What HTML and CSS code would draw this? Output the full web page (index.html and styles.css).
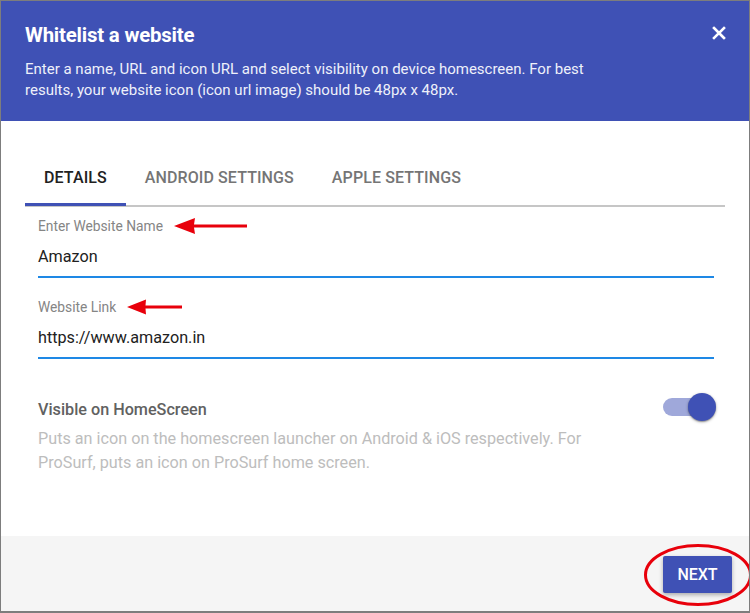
FILE: index.html
```html
<!DOCTYPE html>
<html>
<head>
<meta charset="utf-8">
<link rel="stylesheet" href="styles.css">
</head>
<body>
<div class="dialog">
  <header class="header">
    <div class="title-row">
      <h1 class="title">Whitelist a website</h1>
      <span class="close" aria-label="close">
        <svg width="14" height="14" viewBox="0 0 14 14"><path d="M2 2 L12 12 M12 2 L2 12" stroke="#fff" stroke-width="2.6" stroke-linecap="square"/></svg>
      </span>
    </div>
    <p class="subtitle">Enter a name, URL and icon URL and select visibility on device homescreen. For best results, your website icon (icon url image) should be 48px x 48px.</p>
  </header>

  <main class="content">
    <nav class="tabs">
      <div class="tab active">DETAILS</div>
      <div class="tab">ANDROID SETTINGS</div>
      <div class="tab">APPLE SETTINGS</div>
    </nav>

    <div class="fields">
      <div class="field">
        <div class="label">Enter Website Name<svg class="arrow" width="74" height="18" viewBox="0 0 74 18"><path d="M0 9 L21 1 L20 7.5 L73 7.5 L73 10.5 L20 10.5 L21 17 Z" fill="#e8000b"/></svg></div>
        <div class="input">Amazon</div>
      </div>
      <div class="field second">
        <div class="label">Website Link<svg class="arrow" width="56" height="16" viewBox="0 0 56 16"><path d="M0 8 L19 0.5 L18.5 6.5 L55 6.5 L55 9.5 L18.5 9.5 L19 15.5 Z" fill="#e8000b"/></svg></div>
        <div class="input">https://www.amazon.in</div>
      </div>
    </div>

    <div class="visible-row">
      <div class="visible-text">
        <div class="visible-title">Visible on HomeScreen</div>
        <p class="visible-desc">Puts an icon on the homescreen launcher on Android &amp; iOS respectively. For ProSurf, puts an icon on ProSurf home screen.</p>
      </div>
      <div class="switch"><span class="track"></span><span class="thumb"></span></div>
    </div>
  </main>

  <footer class="footer">
    <div class="btn-wrap">
      <button class="next">NEXT</button>
      <svg class="ring" width="110" height="64" viewBox="0 0 110 64"><ellipse cx="55" cy="32" rx="52.5" ry="29.5" fill="none" stroke="#e8000b" stroke-width="3"/></svg>
    </div>
  </footer>
</div>
</body>
</html>
```

FILE: styles.css
```css
* { box-sizing: border-box; }
html, body { margin: 0; padding: 0; background: #fff; }
body { font-family: Roboto, "Noto Sans", Arial, sans-serif; }

.dialog {
  width: 750px;
  height: 613px;
  border: 1px solid #7d7d7d;
  border-bottom-width: 2px;
  display: flex;
  flex-direction: column;
  background: #fff;
  overflow: hidden;
}

.header {
  background: #3f51b5;
  color: #fff;
  padding: 21px 25px 20px 24px;
  height: 120px;
}
.title-row {
  display: flex;
  justify-content: space-between;
  align-items: center;
  height: 26px;
}
.title {
  margin: 0;
  font-size: 20.4px;
  font-weight: 700;
  line-height: 26px;
  letter-spacing: -0.2px;
}
.close {
  display: flex;
  width: 14px;
  height: 14px;
  margin-right: -2px;
  margin-top: -4px;
}
.subtitle {
  margin: 11px 0 0;
  font-size: 15px;
  line-height: 21px;
  max-width: 575px;
  color: #eef0fa;
}

.content {
  flex: 1;
  padding: 32px 24px 0 24px;
}

.tabs {
  display: flex;
  border-bottom: 2px solid #c6c6c6;
  height: 54px;
}
.tab {
  height: 52px;
  padding: 0 19px 4px;
  display: flex;
  align-items: center;
  justify-content: center;
  font-size: 16px;
  font-weight: 500;
  color: #757575;
  letter-spacing: 0.1px;
}
.tab.active {
  color: #212121;
  min-width: 100px;
  border-bottom: 3px solid #3f51b5;
  height: 53px;
  margin-bottom: -2px;
  padding-bottom: 2px;
}

.fields {
  padding: 10px 11px 0 13px;
}
.field.second { margin-top: 20px; }
.label {
  display: flex;
  align-items: center;
  font-size: 13.8px;
  line-height: 18px;
  height: 18px;
  color: #858585;
}
.arrow { margin-left: 11px; flex: none; }
.input {
  margin-top: 10px;
  font-size: 16.2px;
  line-height: 24px;
  color: #212121;
  padding-bottom: 7px;
  border-bottom: 2px solid #1e88e5;
}

.visible-row {
  display: flex;
  justify-content: space-between;
  align-items: flex-start;
  padding: 39px 9px 0 13px;
}
.visible-title {
  font-size: 16.2px;
  font-weight: 500;
  line-height: 24px;
  color: #616161;
}
.visible-desc {
  margin: 5px 0 0;
  font-size: 16.2px;
  line-height: 24px;
  color: #bdbdbd;
  max-width: 570px;
}
.switch {
  position: relative;
  width: 53px;
  height: 28px;
  margin-top: -5px;
  flex: none;
}
.track {
  position: absolute;
  left: 0;
  top: 5px;
  width: 46px;
  height: 18px;
  border-radius: 9px;
  background: #9fa8da;
}
.thumb {
  position: absolute;
  right: 0;
  top: 0;
  width: 28px;
  height: 28px;
  border-radius: 50%;
  background: #3f51b5;
  box-shadow: 0 1px 3px rgba(0,0,0,0.35), 0 1px 1px rgba(0,0,0,0.2);
}

.footer {
  height: 75px;
  background: #f5f5f5;
  display: flex;
  justify-content: flex-end;
  align-items: flex-start;
  padding: 20px 17px 0 0;
}
.btn-wrap { position: relative; }
.next {
  width: 69px;
  height: 37px;
  border: none;
  border-radius: 2px;
  background: #3f51b5;
  color: #fff;
  font-family: Roboto, Arial, sans-serif;
  font-size: 16px;
  font-weight: 500;
  box-shadow: 0 2px 4px rgba(0,0,0,0.3);
  display: block;
}
.ring {
  position: absolute;
  left: -20px;
  top: -13px;
}
```
